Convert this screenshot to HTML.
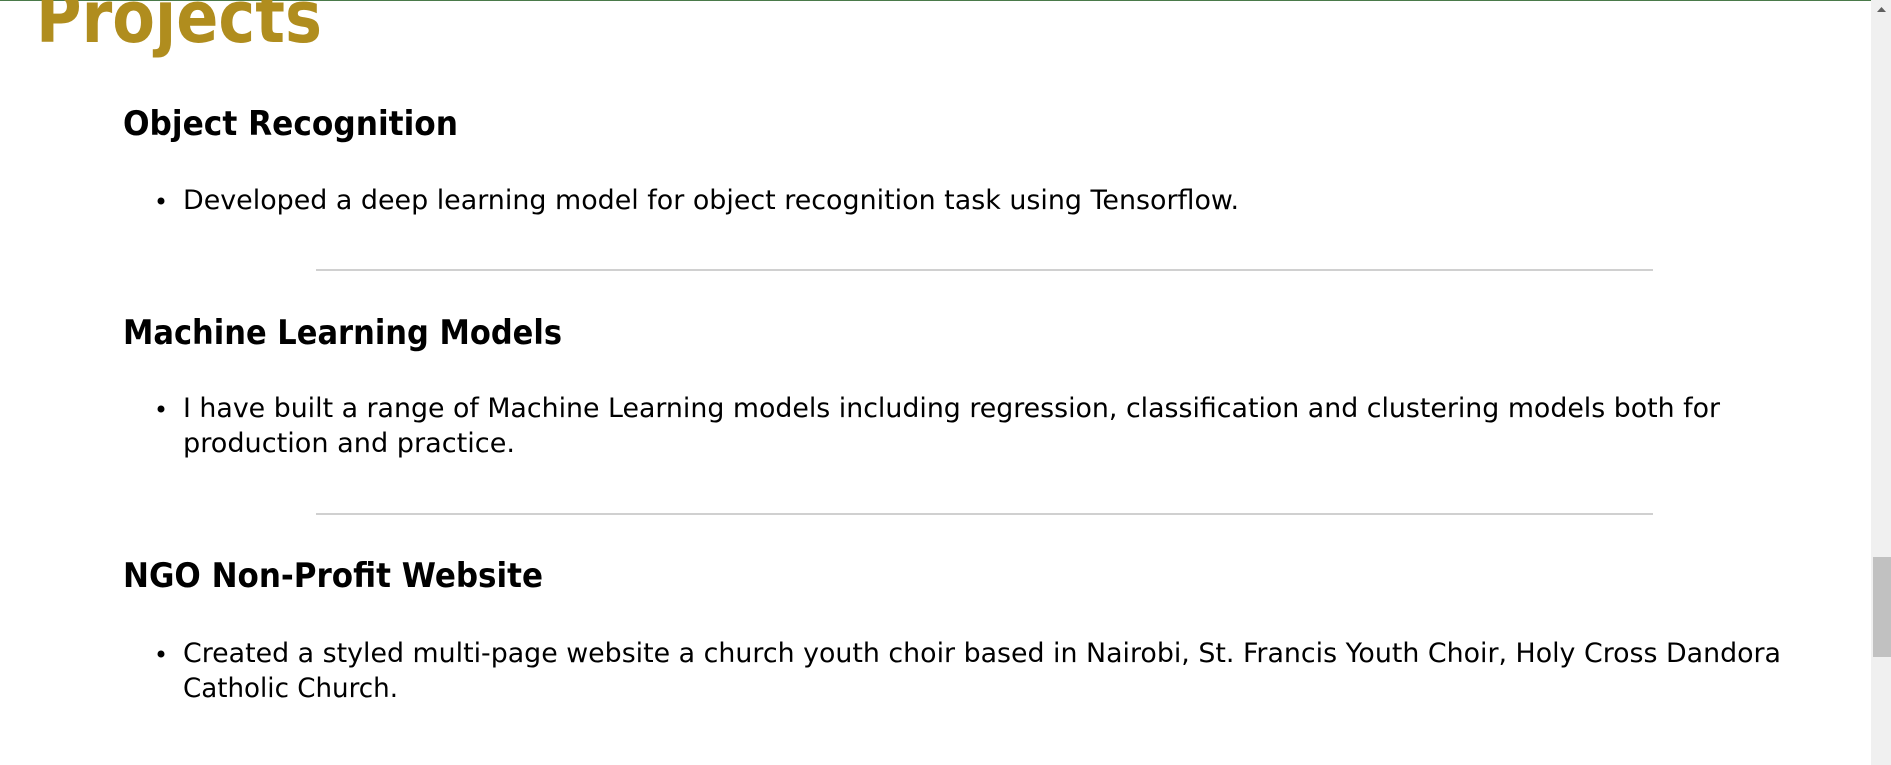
<!DOCTYPE html>
<html><head><meta charset="utf-8"><style>
html,body{margin:0;padding:0;width:1891px;height:765px;overflow:hidden;background:#fff;}
svg{display:block;font-family:"DejaVu Sans","Liberation Sans",sans-serif;}
</style></head><body>
<svg width="1891" height="765" viewBox="0 0 1891 765">
<rect x="0" y="0" width="1891" height="765" fill="#fff"/>
<rect x="0" y="0" width="1871" height="1" fill="#4a7a4a"/>
<text x="36" y="42" font-size="72" font-weight="bold" fill="#b08d1e" textLength="286" lengthAdjust="spacingAndGlyphs">Projects</text>
<text x="123" y="135" font-size="34" font-weight="bold" fill="#000" textLength="335" lengthAdjust="spacingAndGlyphs">Object Recognition</text>
<circle cx="161" cy="201" r="3.5" fill="#000"/>
<text x="183" y="209" font-size="27" fill="#000" textLength="1056" lengthAdjust="spacingAndGlyphs">Developed a deep learning model for object recognition task using Tensorflow.</text>
<rect x="316" y="269" width="1337" height="2" fill="#d0d0d0"/>
<text x="123" y="344" font-size="34" font-weight="bold" fill="#000" textLength="439" lengthAdjust="spacingAndGlyphs">Machine Learning Models</text>
<circle cx="161" cy="409" r="3.5" fill="#000"/>
<text x="183" y="417" font-size="27" fill="#000" textLength="1537" lengthAdjust="spacingAndGlyphs">I have built a range of Machine Learning models including regression, classification and clustering models both for</text>
<text x="183" y="452" font-size="27" fill="#000" textLength="332" lengthAdjust="spacingAndGlyphs">production and practice.</text>
<rect x="316" y="513" width="1337" height="2" fill="#d0d0d0"/>
<text x="123" y="587" font-size="34" font-weight="bold" fill="#000" textLength="420" lengthAdjust="spacingAndGlyphs">NGO Non-Profit Website</text>
<circle cx="161" cy="654" r="3.5" fill="#000"/>
<text x="183" y="662" font-size="27" fill="#000" textLength="1598" lengthAdjust="spacingAndGlyphs">Created a styled multi-page website a church youth choir based in Nairobi, St. Francis Youth Choir, Holy Cross Dandora</text>
<text x="183" y="697" font-size="27" fill="#000" textLength="215" lengthAdjust="spacingAndGlyphs">Catholic Church.</text>
<rect x="1871" y="0" width="20" height="765" fill="#f0f0f0"/>
<polygon points="1877,12 1886,12 1881.5,7" fill="#606060"/>
<rect x="1873" y="557" width="18" height="100" fill="#c1c1c1"/>
</svg>
</body></html>
